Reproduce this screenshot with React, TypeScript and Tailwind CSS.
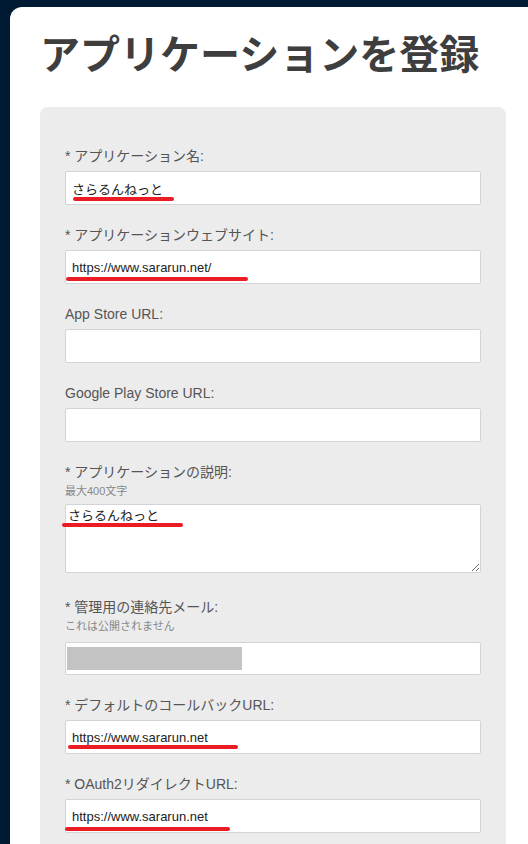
import React from "react";

const FONT = { fontFamily: '"Liberation Sans", "Noto Sans CJK JP", sans-serif' };

function Mark({ left, top, width }: { left: number; top: number; width: number }) {
  return (
    <span
      className="absolute h-[4px] rounded-full bg-[#ec1c24] pointer-events-none"
      style={{ left, top, width }}
    />
  );
}

function Field({
  label,
  value,
  mark,
  className = "",
}: {
  label: string;
  value?: string;
  mark?: { left: number; top: number; width: number };
  className?: string;
}) {
  return (
    <div className={"flex flex-col " + className}>
      <label className="text-[14px] leading-[20px] text-[#555555]">{label}</label>
      <div className="relative mt-[5px]">
        <input
          readOnly
          value={value ?? ""}
          className="block w-full h-[34px] rounded-[2px] border border-[#d3d3da] bg-white px-[6px] text-[13px] text-[#222222] outline-none"
          style={FONT}
        />
        {mark && <Mark {...mark} />}
      </div>
    </div>
  );
}

export default function App() {
  return (
    <div
      className="w-[528px] h-[844px] overflow-hidden bg-[#011a34] pt-[7px] pl-[10px]"
      style={FONT}
    >
      <div className="w-[560px] h-[900px] bg-white rounded-tl-[12px] pl-[30px] pt-[24px]">
        <h1 className="text-[40px] leading-[48px] font-bold text-[#3e3e3e] tracking-[0px]">
          アプリケーションを登録
        </h1>
        <div className="mt-[28px] w-[466px] rounded-[8px] bg-[#ececec] px-[25px] pt-[39px] pb-[40px]">
          <Field
            label="* アプリケーション名:"
            value="さらるんねっと"
            mark={{ left: 8, top: 26, width: 101 }}
            className="mb-[20px]"
          />
          <Field
            label="* アプリケーションウェブサイト:"
            value="https://www.sararun.net/"
            mark={{ left: 1, top: 27, width: 182 }}
            className="mb-[20px]"
          />
          <Field label="App Store URL:" className="mb-[20px]" />
          <Field label="Google Play Store URL:" className="mb-[20px]" />

          <div className="flex flex-col mb-[24px]">
            <label className="text-[14px] leading-[20px] text-[#555555]">* アプリケーションの説明:</label>
            <span className="mt-[1px] text-[11px] leading-[16px] text-[#888888]">最大400文字</span>
            <div className="relative mt-[5px]">
              <textarea
                readOnly
                defaultValue="さらるんねっと"
                className="block w-full h-[69px] rounded-[2px] border border-[#d3d3da] bg-white px-[2px] py-[2px] text-[13px] leading-[18px] text-[#222222] outline-none"
                style={FONT}
              />
              <Mark left={-3} top={19} width={121} />
            </div>
          </div>

          <div className="flex flex-col mb-[20px]">
            <label className="text-[14px] leading-[20px] text-[#555555]">* 管理用の連絡先メール:</label>
            <span className="mt-[1px] text-[11px] leading-[16px] text-[#888888]">これは公開されません</span>
            <div className="mt-[8px] h-[33px] rounded-[2px] border border-[#d3d3da] bg-white flex items-center pl-[1px]">
              <div className="w-[175px] h-[23px] bg-[#c3c3c3]" />
            </div>
          </div>

          <Field
            label="* デフォルトのコールバックURL:"
            value="https://www.sararun.net"
            mark={{ left: 3, top: 25, width: 170 }}
            className="mb-[20px]"
          />
          <Field
            label="* OAuth2リダイレクトURL:"
            value="https://www.sararun.net"
            mark={{ left: 0, top: 28, width: 165 }}
          />
        </div>
      </div>
    </div>
  );
}
